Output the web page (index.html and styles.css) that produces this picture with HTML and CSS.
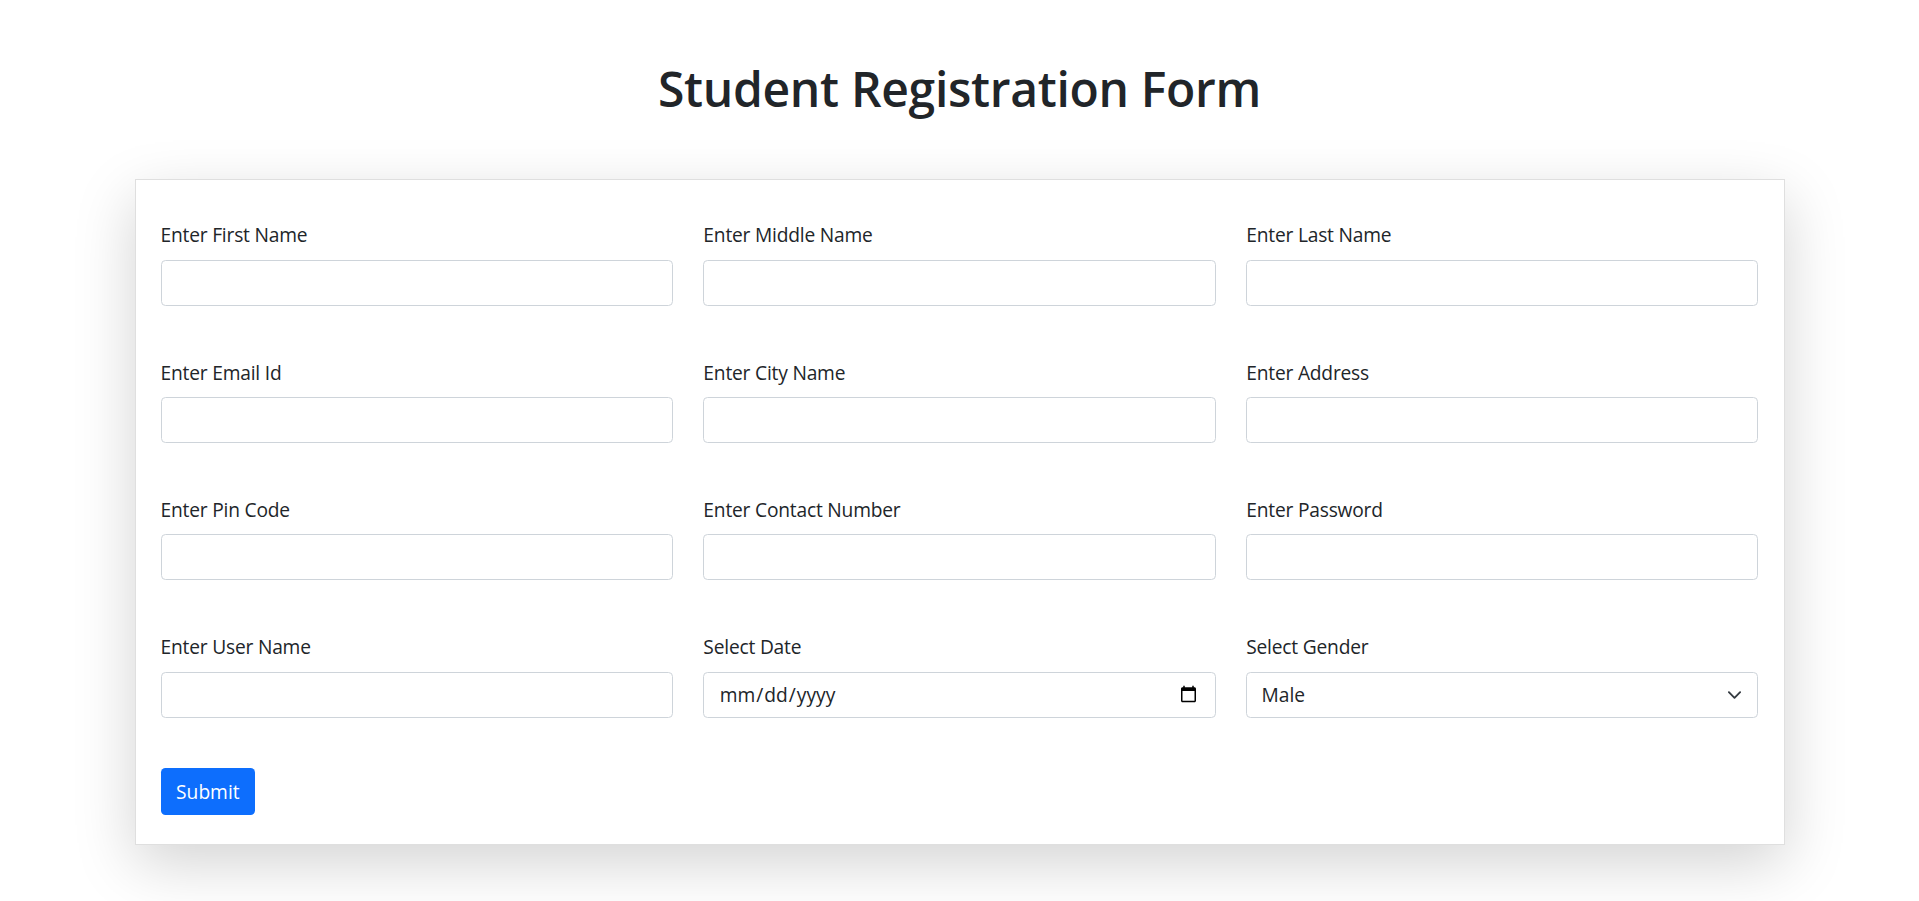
FILE: index.html
```html
<!DOCTYPE html>
<html lang="en">
<head>
<meta charset="utf-8">
<title>Student Registration Form</title>
<link rel="stylesheet" href="styles.css">
</head>
<body>
<main class="page">
  <h1 class="title">Student Registration Form</h1>
  <form class="card">
    <div class="grid">
      <div class="field"><label>Enter First Name</label><input class="control" type="text"></div>
      <div class="field"><label>Enter Middle Name</label><input class="control" type="text"></div>
      <div class="field"><label>Enter Last Name</label><input class="control" type="text"></div>
      <div class="field"><label>Enter Email Id</label><input class="control" type="email"></div>
      <div class="field"><label>Enter City Name</label><input class="control" type="text"></div>
      <div class="field"><label>Enter Address</label><input class="control" type="text"></div>
      <div class="field"><label>Enter Pin Code</label><input class="control" type="text"></div>
      <div class="field"><label>Enter Contact Number</label><input class="control" type="text"></div>
      <div class="field"><label>Enter Password</label><input class="control" type="password"></div>
      <div class="field"><label>Enter User Name</label><input class="control" type="text"></div>
      <div class="field"><label>Select Date</label><input class="control" type="date"></div>
      <div class="field"><label>Select Gender</label>
        <div class="select-wrap">
          <select class="control select"><option>Male</option><option>Female</option></select>
          <svg class="chevron" viewBox="0 0 16 16" width="15" height="15"><path fill="none" stroke="#343a40" stroke-linecap="round" stroke-linejoin="round" stroke-width="2" d="m2 5 6 6 6-6"/></svg>
        </div>
      </div>
    </div>
    <div class="actions"><button class="btn" type="button">Submit</button></div>
  </form>
</main>
</body>
</html>
```

FILE: styles.css
```css
* { box-sizing: border-box; }
body {
  margin: 0;
  font-family: "Open Sans", "Noto Sans", sans-serif;
  color: #212529;
  background: #fff;
}
.page { padding: 60px 0 57px; }
.title {
  margin: 0;
  font-size: 48px;
  font-weight: 600;
  letter-spacing: -0.3px;
  line-height: 1.2;
  text-align: center;
}
.card {
  display: block;
  width: 1650px;
  margin: 61px auto 0;
  background: #fff;
  border: 1px solid rgba(0,0,0,.125);
  box-shadow: 0 19.2px 57.6px rgba(0,0,0,.175);
  padding: 41.6px 25px 29px;
}
.grid {
  display: grid;
  grid-template-columns: repeat(3, 1fr);
  column-gap: 30.6px;
  row-gap: 53px;
}
.field label {
  display: block;
  font-size: 19.2px;
  line-height: 28.8px;
  letter-spacing: -0.2px;
  margin-bottom: 9.6px;
}
.control {
  display: block;
  width: 100%;
  height: 46px;
  padding: 0 14.4px;
  font-family: inherit;
  font-size: 19.2px;
  color: #212529;
  background: #fff;
  border: 1px solid #ced4da;
  border-radius: 4.5px;
  outline: none;
}
.select-wrap { position: relative; }
.select { appearance: none; -webkit-appearance: none; }
.chevron {
  position: absolute;
  right: 16.8px;
  top: 50%;
  transform: translateY(-50%);
  pointer-events: none;
}
.actions { margin-top: 50.4px; }
.btn {
  height: 46.6px;
  padding: 0 15.6px;
  font-family: inherit;
  font-size: 19.2px;
  color: #fff;
  background: #0d6efd;
  border: 0;
  border-radius: 4.5px;
}
```
